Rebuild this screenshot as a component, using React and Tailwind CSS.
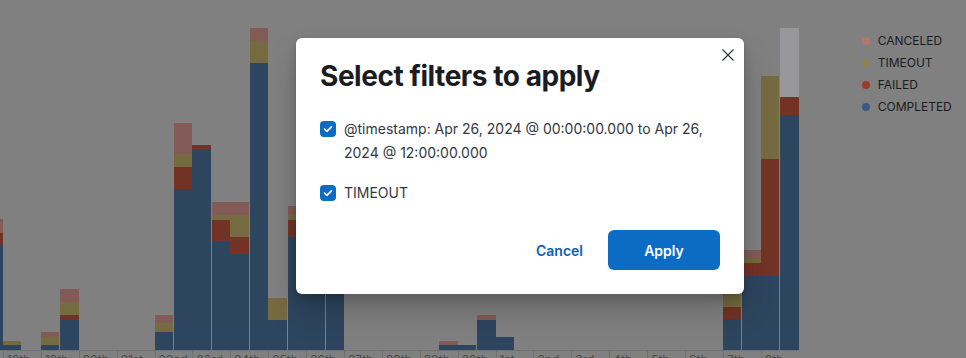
import React from "react";

const C = {
  other: "#98989c",
  canceled: "#835b56",
  timeout: "#756a40",
  failed: "#733226",
  completed: "#2d455e",
};

const days = [
  { label: "17th", bars: [null, { canceled: 14, failed: 12, completed: 105 }] },
  { label: "18th", bars: [{ timeout: 4, completed: 5 }, null] },
  { label: "19th", bars: [{ canceled: 5, timeout: 8, completed: 5 }, { canceled: 13, timeout: 13, failed: 4, completed: 31 }] },
  { label: "20th", bars: [null, null] },
  { label: "21st", bars: [null, null] },
  { label: "22nd", bars: [{ canceled: 8, timeout: 9, completed: 18 }, { canceled: 31, timeout: 13, failed: 22, completed: 161 }] },
  { label: "23rd", bars: [{ failed: 4, completed: 201 }, { canceled: 13, timeout: 5, failed: 21, completed: 109 }] },
  { label: "24th", bars: [{ canceled: 13, timeout: 22, failed: 17, completed: 96 }, { canceled: 13, timeout: 22, completed: 287 }] },
  { label: "25th", bars: [{ timeout: 22, completed: 30 }, { canceled: 9, timeout: 5, failed: 17, completed: 113 }] },
  { label: "26th", bars: [{ completed: 180 }, { completed: 150 }] },
  { label: "27th", bars: [null, null] },
  { label: "28th", bars: [null, null] },
  { label: "29th", bars: [null, { canceled: 4, completed: 5 }] },
  { label: "30th", bars: [{ completed: 5 }, { canceled: 5, completed: 30 }] },
  { label: "1st", bars: [{ completed: 13 }, null] },
  { label: "2nd", bars: [null, null] },
  { label: "3rd", bars: [null, null] },
  { label: "4th", bars: [null, null] },
  { label: "5th", bars: [null, null] },
  { label: "6th", bars: [null, null] },
  { label: "7th", bars: [{ timeout: 22, failed: 12, completed: 31 }, { canceled: 8, timeout: 5, failed: 13, completed: 74 }] },
  { label: "8th", bars: [{ timeout: 83, failed: 117, completed: 74 }, { other: 69, failed: 18, completed: 235 }] },
];

const order = ["other", "canceled", "timeout", "failed", "completed"];

function Bar({ data }) {
  return (
    <div className="flex flex-1 flex-col justify-end">
      {data &&
        order
          .filter((k) => data[k])
          .map((k) => (
            <div key={k} style={{ height: data[k], backgroundColor: C[k] }} />
          ))}
    </div>
  );
}

function Checkbox() {
  return (
    <span className="mt-[4px] flex h-4 w-4 shrink-0 items-center justify-center rounded-[4px] bg-[#0c6cc4]">
      <svg width="16" height="16" viewBox="0 0 16 16" fill="none">
        <path d="M4.6 8.2 L6.9 10.4 L11.4 5.9" stroke="white" strokeWidth="1.7" strokeLinecap="round" strokeLinejoin="round" />
      </svg>
    </span>
  );
}

export default function App() {
  const legend = [
    ["CANCELED", "#b0766f"],
    ["TIMEOUT", "#8d8252"],
    ["FAILED", "#9b3b2b"],
    ["COMPLETED", "#3a5a80"],
  ];
  return (
    <div className="relative flex h-[358px] w-[966px] items-start overflow-hidden bg-[#808080] font-['Inter',sans-serif]">
      {/* chart */}
      <div className="ml-[-34.9px] flex shrink-0">
        {days.map((d) => (
          <div key={d.label} className="flex w-[37.9px] shrink-0 flex-col">
            <div className="flex h-[350px] shrink-0 items-end gap-[1px]">
              <Bar data={d.bars[0]} />
              <Bar data={d.bars[1]} />
            </div>
            <div className="h-[30px] shrink-0 border-l border-t border-[#707070] pl-[3px] pt-[1px] text-[12px] leading-4 text-[#4a4a4a]">
              {d.label}
            </div>
          </div>
        ))}
      </div>

      {/* legend */}
      <div className="flex flex-col pl-[63px] pt-[30px]">
        {legend.map(([t, c]) => (
          <div key={t} className="flex h-[22px] items-center gap-[8px] text-[12px] text-[#1c1c1e]">
            <span className="h-2 w-2 rounded-full" style={{ backgroundColor: c }} />
            <span>{t}</span>
          </div>
        ))}
      </div>

      {/* modal */}
      <div className="absolute left-[296px] top-[38px] w-[448px] rounded-[6px] bg-white px-6 pb-6 pt-[20px] shadow-[0_4px_10px_rgba(0,0,0,0.18),0_18px_30px_rgba(0,0,0,0.18)]">
        <button className="absolute right-[8px] top-[9px] flex h-4 w-4 items-center justify-center">
          <svg width="16" height="16" viewBox="0 0 16 16" fill="none">
            <path d="M2.5 2.5 L13.5 13.5 M13.5 2.5 L2.5 13.5" stroke="#343741" strokeWidth="1.2" />
          </svg>
        </button>
        <h2 className="text-[28px] font-bold leading-[36px] tracking-[-0.45px] text-[#1a1c21]">
          Select filters to apply
        </h2>
        <div className="mt-[23px] flex flex-col gap-4">
          <label className="flex gap-2 text-[14px] leading-6 text-[#343741]">
            <Checkbox />
            <span>@timestamp: Apr 26, 2024 @ 00:00:00.000 to Apr 26, 2024 @ 12:00:00.000</span>
          </label>
          <label className="flex gap-2 text-[14px] leading-6 text-[#343741]">
            <Checkbox />
            <span>TIMEOUT</span>
          </label>
        </div>
        <div className="mt-[25px] flex items-center justify-end gap-[13px]">
          <button className="h-10 px-3 text-[14px] font-semibold text-[#0b61b3]">Cancel</button>
          <button className="h-10 w-[112px] rounded-[6px] bg-[#0c6cc4] text-[14px] font-semibold text-white">
            Apply
          </button>
        </div>
      </div>
    </div>
  );
}
